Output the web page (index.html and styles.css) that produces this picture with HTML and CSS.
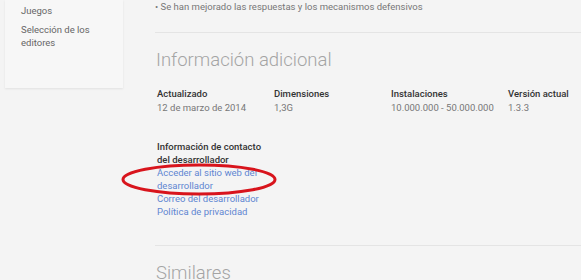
FILE: index.html
```html
<!DOCTYPE html>
<html lang="es">
<head>
<meta charset="utf-8">
<link rel="stylesheet" href="styles.css">
</head>
<body>
<div class="page">
  <nav class="sidebar">
    <a class="nav-item">Juegos</a>
    <a class="nav-item">Selección de los editores</a>
  </nav>
  <main class="main">
    <p class="changes">• Se han mejorado las respuestas y los mecanismos defensivos</p>
    <hr class="divider">
    <h2 class="heading">Información adicional</h2>
    <div class="meta">
      <div class="meta-item"><div class="label">Actualizado</div><div class="value">12 de marzo de 2014</div></div>
      <div class="meta-item"><div class="label">Dimensiones</div><div class="value">1,3G</div></div>
      <div class="meta-item"><div class="label">Instalaciones</div><div class="value">10.000.000 - 50.000.000</div></div>
      <div class="meta-item"><div class="label">Versión actual</div><div class="value">1.3.3</div></div>
    </div>
    <div class="contact">
      <div class="label contact-title">Información de contacto del desarrollador</div>
      <a class="link">Acceder al sitio web del desarrollador</a>
      <a class="link">Correo del desarrollador</a>
      <a class="link">Política de privacidad</a>
      <svg class="circle" width="158" height="33" viewBox="0 0 158 33"><ellipse cx="79" cy="16.5" rx="76" ry="14.5" fill="none" stroke="#d8141c" stroke-width="3"/></svg>
    </div>
    <hr class="divider divider-bottom">
    <h2 class="heading">Similares</h2>
  </main>
</div>
</body>
</html>
```
FILE: styles.css
```css
html, body {
  margin: 0;
  padding: 0;
  background: #f4f4f4;
  font-family: Roboto, "Liberation Sans", Arial, sans-serif;
  overflow: hidden;
}
.page {
  display: flex;
  align-items: flex-start;
  width: 581px;
  height: 280px;
}
.sidebar {
  flex-shrink: 0;
  margin-left: 5px;
  width: 118px;
  height: 88px;
  box-sizing: border-box;
  padding: 4px 0 0 16px;
  background: #f7f7f7;
  box-shadow: 0 1px 2px rgba(0,0,0,0.08);
  display: flex;
  flex-direction: column;
  gap: 6px;
}
.nav-item {
  font-size: 9.5px;
  line-height: 13px;
  color: #666;
  width: 84px;
}
.main {
  flex-shrink: 0;
  margin-left: 32px;
  width: 426px;
  position: relative;
}
.changes {
  margin: 0;
  font-size: 9.5px;
  line-height: 13px;
  color: #777;
  white-space: nowrap;
}
.divider {
  margin: 19px 0 0 0;
  border: 0;
  border-top: 1px solid #e4e4e4;
  height: 0;
}
.heading {
  margin: 15px 0 0 1px;
  font-size: 18.5px;
  font-weight: 300;
  line-height: 24px;
  color: #a4a4a4;
}
.meta {
  display: flex;
  margin-top: 15px;
  padding-left: 2px;
}
.meta-item {
  width: 117px;
  flex-shrink: 0;
}
.meta-item:last-child {
  width: 70px;
}
.label {
  font-size: 9.5px;
  font-weight: 500;
  color: #333;
  line-height: 14px;
}
.value {
  font-size: 9.5px;
  color: #777;
  line-height: 14px;
}
.contact {
  position: relative;
  margin-top: 25px;
  padding-left: 2px;
  width: 110px;
  display: flex;
  flex-direction: column;
}
.contact-title {
  line-height: 13px;
}
.link {
  font-size: 9.5px;
  line-height: 13px;
  color: #5f86d2;
}
.circle {
  position: absolute;
  left: -35px;
  top: 23px;
}
.divider-bottom {
  margin-top: 27px;
}
```
